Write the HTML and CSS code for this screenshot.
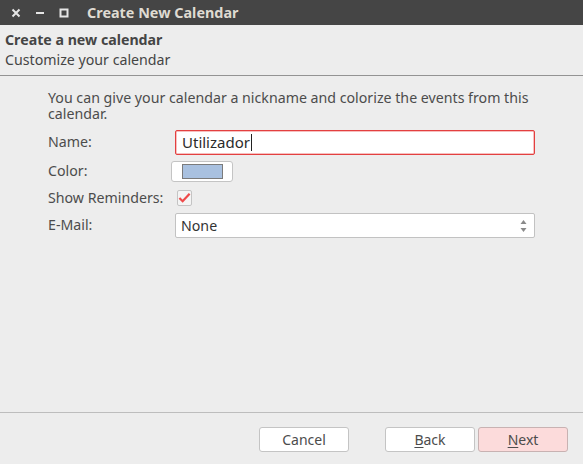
FILE: index.html
```html
<!DOCTYPE html>
<html lang="en">
<head>
<meta charset="utf-8">
<title>Create New Calendar</title>
<link rel="stylesheet" href="styles.css">
</head>
<body>
<div class="window">
  <header class="titlebar">
    <div class="wm-buttons">
      <span class="wm-btn">
        <svg width="10" height="10" viewBox="0 0 10 10"><path d="M1.5 1.5 L8.5 8.5 M8.5 1.5 L1.5 8.5" stroke="#e6e6e6" stroke-width="2"/></svg>
      </span>
      <span class="wm-btn">
        <svg width="10" height="10" viewBox="0 0 10 10"><rect x="1" y="4" width="8" height="2" fill="#e6e6e6"/></svg>
      </span>
      <span class="wm-btn">
        <svg width="10" height="10" viewBox="0 0 10 10"><rect x="1.5" y="1.5" width="7" height="7" fill="none" stroke="#e6e6e6" stroke-width="2"/></svg>
      </span>
    </div>
    <div class="title">Create New Calendar</div>
  </header>

  <section class="page-head">
    <div class="page-title">Create a new calendar</div>
    <div class="page-sub">Customize your calendar</div>
  </section>

  <main class="content">
    <p class="intro">You can give your calendar a nickname and colorize the events from this calendar.</p>
    <div class="form">
      <label class="lbl">Name:</label>
      <div class="field"><div class="textbox focused">Utilizador<span class="caret"></span></div></div>

      <label class="lbl">Color:</label>
      <div class="field"><div class="color-btn"><span class="swatch"></span></div></div>

      <label class="lbl">Show Reminders:</label>
      <div class="field"><span class="check">
        <svg width="14" height="12" viewBox="0 0 14 12"><path d="M1.5 6 L5 9.5 L12.5 1.5" fill="none" stroke="#ef4a4a" stroke-width="2.4" stroke-linejoin="miter"/></svg>
      </span></div>

      <label class="lbl">E-Mail:</label>
      <div class="field"><div class="textbox select">None
        <span class="spin">
          <svg width="7" height="14" viewBox="0 0 7 14"><path d="M3.5 1 L6.5 5 L0.5 5 Z M3.5 13 L6.5 9 L0.5 9 Z" fill="#8a8a8a"/></svg>
        </span>
      </div></div>
    </div>
  </main>

  <footer class="actions">
    <button class="btn cancel">Cancel</button>
    <div class="nav">
      <button class="btn"><u>B</u>ack</button>
      <button class="btn primary"><u>N</u>ext</button>
    </div>
  </footer>
</div>
</body>
</html>
```

FILE: styles.css
```css
* { box-sizing: border-box; }

html, body {
  margin: 0;
  padding: 0;
  background: #ededed;
}

body {
  font-family: "Noto Sans", "DejaVu Sans", sans-serif;
  font-size: 14.2px;
  color: #4c4c4c;
}

.window {
  width: 583px;
  height: 464px;
  display: flex;
  flex-direction: column;
  background: #ededed;
}

/* window manager bar */
.titlebar {
  height: 25px;
  background: #454545;
  display: flex;
  align-items: center;
}

.wm-buttons {
  display: flex;
  padding-left: 11px;
  gap: 14px;
}

.wm-btn {
  width: 10px;
  height: 10px;
  display: flex;
}

.title {
  margin-left: 18px;
  font-weight: bold;
  font-size: 14.4px;
  color: #dfdbd2;
}

/* wizard page header */
.page-head {
  height: 51px;
  padding: 5px 0 0 5px;
  border-bottom: 1px solid #939393;
  line-height: 20px;
}

.page-title {
  font-weight: bold;
  color: #454545;
}

.page-sub {
  color: #454545;
}

/* form */
.content {
  flex: 1;
  padding: 14px 40px 0 48px;
  border-bottom: 1px solid #bdbdbd;
}

.intro {
  margin: 0 0 5px 0;
  line-height: 16px;
}

.form {
  display: grid;
  grid-template-columns: 127px 360px;
  grid-template-rows: 30px 28px 26px 28px;
  align-items: center;
}

.lbl {
  line-height: 20px;
}

.field {
  display: flex;
  align-items: center;
}

.textbox {
  width: 360px;
  height: 25px;
  background: #fff;
  border: 1px solid #c2c2c2;
  border-radius: 2px;
  padding: 0 6px;
  display: flex;
  align-items: center;
  color: #333;
  position: relative;
}

.textbox.focused {
  border-color: #e34040;
  box-shadow: inset 0 0 0 0.5px #f08080;
  font-size: 15px;
  color: #2b2b2b;
}

.caret {
  display: inline-block;
  width: 1px;
  height: 17px;
  background: #222;
  margin-left: 1px;
}

.select {
  padding-left: 5px;
}

.spin {
  position: absolute;
  right: 7px;
  top: 5px;
  display: flex;
}

.color-btn {
  width: 62px;
  height: 21px;
  margin-left: -4px;
  background: #fff;
  border: 1px solid #c4c4c4;
  border-radius: 3px;
  display: flex;
  align-items: center;
  justify-content: center;
}

.swatch {
  width: 41px;
  height: 15px;
  background: #a9c1e0;
  border: 1px solid #7b7b7b;
}

.check {
  width: 15px;
  height: 16px;
  margin-left: 2px;
  border: 1px solid #c4c4c4;
  border-radius: 2px;
  background: #f4f4f4;
  display: flex;
  align-items: center;
  justify-content: center;
}

/* wizard buttons */
.actions {
  height: 51px;
  display: flex;
  align-items: flex-start;
  padding: 14px 15px 0 259px;
  justify-content: space-between;
}

.nav {
  display: flex;
  gap: 3px;
}

.btn {
  width: 90px;
  height: 25px;
  font-family: inherit;
  font-size: 14px;
  color: #4c4c4c;
  background: #fff;
  border: 1px solid #c4c4c4;
  border-radius: 3px;
  padding: 0;
}

.btn u {
  text-decoration-thickness: 1px;
  text-underline-offset: 2px;
}

.btn.primary {
  background: #fcdbdb;
  border-color: #c8b2b2;
}
```
